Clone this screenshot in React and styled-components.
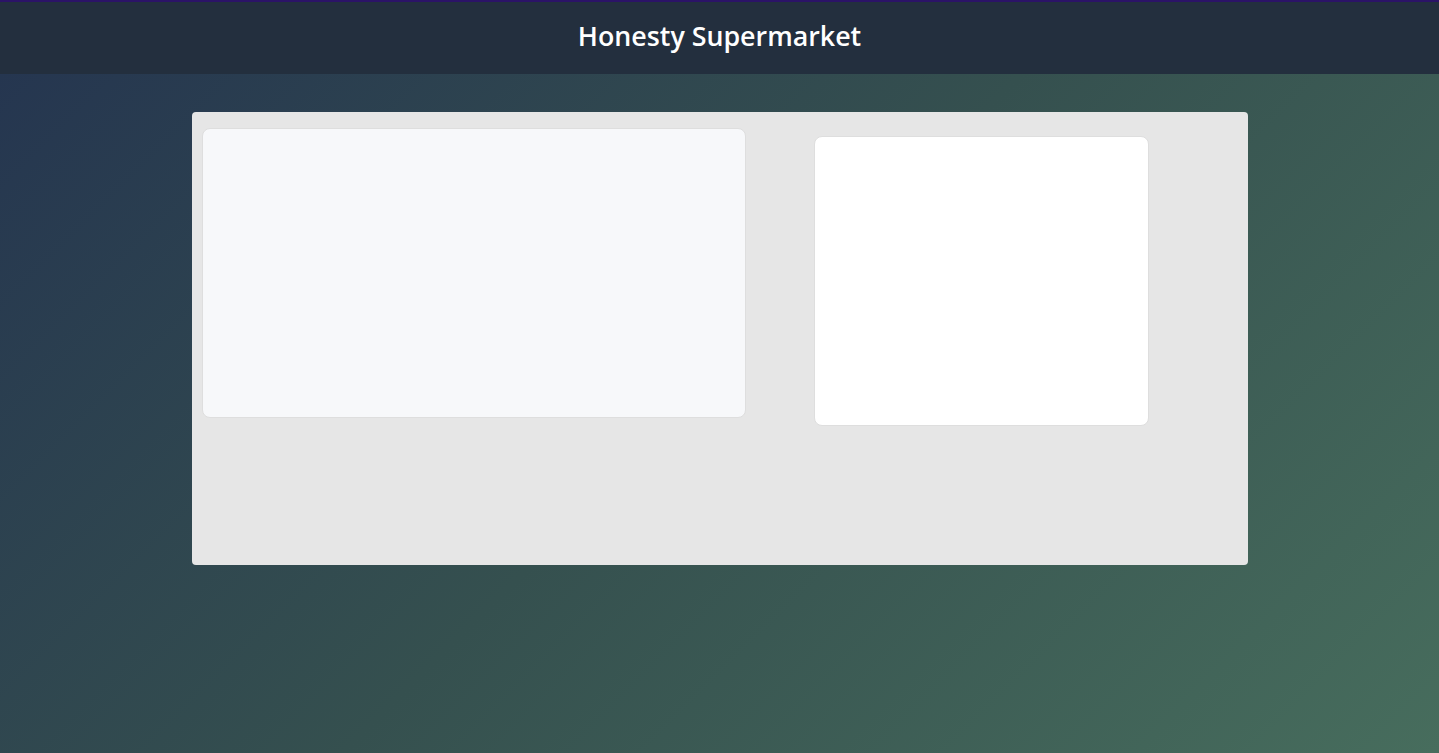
import React from 'react';
import styled, { createGlobalStyle } from 'styled-components';

const GlobalStyle = createGlobalStyle`
  * {
    box-sizing: border-box;
  }

  html, body {
    margin: 0;
    padding: 0;
  }

  body {
    min-height: 100vh;
    font-family: 'Open Sans', 'Noto Sans', sans-serif;
    background: linear-gradient(135deg, #243450 0%, #35504f 50%, #476d5d 100%);
    background-attachment: fixed;
  }
`;

const Page = styled.div`
  min-height: 100vh;
`;

const Header = styled.header`
  height: 74px;
  background: #232f3e;
  border-top: 2px solid #2b1367;
  display: flex;
  align-items: center;
  justify-content: center;
`;

const Title = styled.h1`
  margin: 0;
  color: #ffffff;
  font-size: 26.8px;
  font-weight: 600;
  padding-bottom: 6px;
`;

const Main = styled.main`
  display: flex;
  justify-content: center;
  padding-top: 38px;
`;

const Board = styled.section`
  width: 1056px;
  height: 453px;
  background: #e6e6e6;
  border-radius: 4px;
  padding: 16px 10px;
  display: flex;
  align-items: flex-start;
`;

const Card = styled.div`
  width: ${(p) => p.$width}px;
  height: 290px;
  margin-top: ${(p) => p.$offset || 0}px;
  margin-left: ${(p) => p.$gap || 0}px;
  background: ${(p) => (p.$white ? '#ffffff' : '#f7f8fa')};
  border: 1px solid #dedede;
  border-radius: 8px;
`;

const App = () => {
  return (
    <Page>
      <GlobalStyle />
      <Header>
        <Title>Honesty Supermarket</Title>
      </Header>
      <Main>
        <Board>
          <Card $width={544} />
          <Card $width={335} $gap={68} $offset={8} $white />
        </Board>
      </Main>
    </Page>
  );
};

export default App;
